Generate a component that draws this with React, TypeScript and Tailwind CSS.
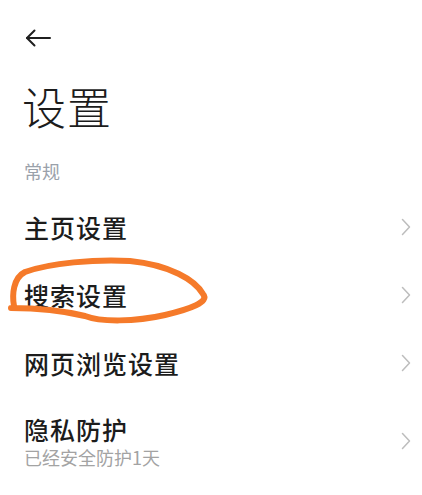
const FONT = "font-['Noto_Sans_CJK_SC','Noto_Sans',sans-serif]";

const items: { label: string; sub?: string; circled?: boolean }[] = [
  { label: "主页设置" },
  { label: "搜索设置", circled: true },
  { label: "网页浏览设置" },
  { label: "隐私防护", sub: "已经安全防护1天" },
];

function BackArrow() {
  return (
    <svg width="26" height="18" viewBox="0 0 26 18" fill="none" stroke="#1f1f1f" strokeWidth="2" strokeLinecap="round" strokeLinejoin="round">
      <path d="M2 9h23" />
      <path d="M9.5 1.5L2 9l7.5 7.5" />
    </svg>
  );
}

function Chevron() {
  return (
    <svg width="10" height="18" viewBox="0 0 10 18" fill="none" stroke="#bdbdbd" strokeWidth="1.5" strokeLinecap="round" strokeLinejoin="round">
      <path d="M1.5 1.5L8.5 9l-7 7.5" />
    </svg>
  );
}

function Scribble() {
  // hand-drawn orange circle around the second row (y offset is the row top)
  return (
    <svg
      className="pointer-events-none absolute left-0 top-0"
      width="215"
      height="70"
      viewBox="0 256 215 70"
      fill="none"
      stroke="#f57a2a"
      strokeWidth="6"
      strokeLinecap="round"
      strokeLinejoin="round"
    >
      <path d="M11 308C32 308 60 310 85 316C100 322 135 322 165 315C190 309 210 302 203 294C195 280 170 265 130 261C95 259 50 263 25 272C13 278 12 295 14 306" />
    </svg>
  );
}

export default function App() {
  return (
    <div className={`relative h-[495px] w-[422px] overflow-hidden bg-white text-[#1c1c1c] ${FONT}`}>
      <div className="flex h-[76px] items-center pl-[25px]">
        <BackArrow />
      </div>

      <h1 className="pl-[22px] text-[44px] font-light leading-[60px] tracking-[1px]">设置</h1>

      <p className="mt-[23px] pl-[24px] text-[18px] leading-[24px] text-[#9aa1aa]">常规</p>

      <ul className="mt-[10px]">
        {items.map((it) => (
          <li
            key={it.label}
            className={`relative flex items-center justify-between pl-[24px] pr-[11px] ${it.sub ? "pb-[6px] pt-[16px]" : "h-[68px]"}`}
          >
            {it.circled && (
              <div className="pointer-events-none absolute left-0 top-[-5px]">
                <Scribble />
              </div>
            )}
            <div>
              <div className="text-[25px] font-medium leading-[32px] tracking-[1px]">{it.label}</div>
              {it.sub && <div className="text-[18px] leading-[24px] text-[#a3a3a3]">{it.sub}</div>}
            </div>
            <Chevron />
          </li>
        ))}
      </ul>
    </div>
  );
}
